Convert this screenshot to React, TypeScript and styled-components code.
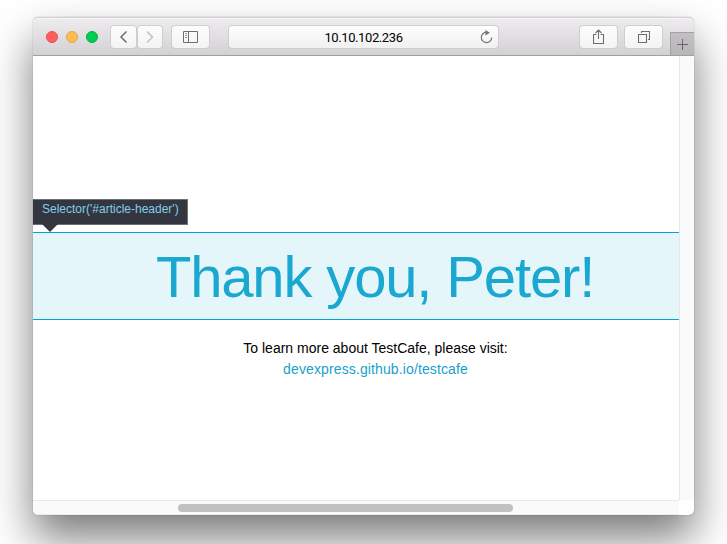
import React from 'react';
import styled, { createGlobalStyle } from 'styled-components';

const GlobalStyle = createGlobalStyle`
  * { box-sizing: border-box; }
  html, body { margin: 0; height: 100%; overflow: hidden; background: #fff; }
  body { font-family: "Liberation Sans", Arial, sans-serif; }
`;

const Desktop = styled.main`
  width: 727px;
  height: 544px;
  padding: 17px 33px 29px;
  overflow: hidden;
  background: #fff;
`;

const BrowserWindow = styled.section`
  display: flex;
  flex-direction: column;
  width: 661px;
  height: 498px;
  border-radius: 5px;
  background: #fff;
  box-shadow: 0 0 1px rgba(0, 0, 0, 0.5), 0 23px 44px rgba(0, 0, 0, 0.52);
`;

const Toolbar = styled.header`
  display: flex;
  align-items: flex-start;
  flex: none;
  height: 39px;
  padding: 8px 0 0 13px;
  border-top: 1px solid #d4d3d4;
  border-bottom: 1px solid #a09fa1;
  border-radius: 5px 5px 0 0;
  background: linear-gradient(#eeecef, #d3d1d4);
  box-shadow: inset 0 1px #f6f5f6;
`;

const Lights = styled.div`
  display: flex;
  gap: 8px;
  padding-top: 5px;
  margin-right: 12px;
`;

const Light = styled.span<{ $fill: string; $edge: string }>`
  width: 12px;
  height: 12px;
  border: 1px solid ${(p) => p.$edge};
  border-radius: 50%;
  background: ${(p) => p.$fill};
`;

const ToolButton = styled.button<{ $width: number; $gap?: number; $muted?: boolean }>`
  display: flex;
  align-items: center;
  justify-content: center;
  width: ${(p) => p.$width}px;
  height: 24px;
  margin: -1px ${(p) => p.$gap ?? 0}px 0 0;
  padding: 0;
  border: 0;
  border-radius: 4px;
  background: linear-gradient(#fdfdfd, #f4f3f4);
  box-shadow: inset 0 0 0 1px #cfcdd0, inset 0 -1px #bebcbf;
  color: ${(p) => (p.$muted ? '#c0c0c0' : '#6e6e6e')};
`;

const Address = styled.div`
  display: grid;
  grid-template-columns: 20px 1fr 20px;
  align-items: center;
  width: 271px;
  height: 24px;
  margin: -1px 80px 0 0;
  border-radius: 4px;
  background: linear-gradient(#fefefe, #f1f0f1);
  box-shadow: inset 0 0 0 1px #cfcdd0, inset 0 -1px #b9b7ba;
  color: #747474;
`;

const AddressText = styled.span`
  grid-column: 2;
  padding-top: 2px;
  text-align: center;
  color: #000;
  font: 13px/22px Roboto, sans-serif;
  letter-spacing: -0.4px;
`;

const NewTab = styled.button`
  display: flex;
  align-items: center;
  justify-content: center;
  width: 24px;
  height: 23px;
  margin: 6px 0 0;
  padding: 0;
  border: solid #a3a1a4;
  border-width: 1px 0 0 1px;
  background: linear-gradient(#c2c0c3, #b7b5b8);
  color: #69676a;
`;

const Body = styled.div`
  display: grid;
  grid-template-columns: 646px 15px;
  grid-template-rows: 444px 15px;
`;

const Page = styled.article`
  display: flex;
  flex-direction: column;
  align-items: flex-start;
  padding-top: 143px;
  background: #fff;
`;

const SelectorTip = styled.div`
  position: relative;
  width: 155px;
  height: 26px;
  padding-left: 8px;
  margin-bottom: 7px;
  border: 1px solid #6c7079;
  border-left-color: #33363e;
  background: #33363f;
  color: #84cdeb;
  font-size: 12px;
  line-height: 18px;
  white-space: nowrap;
  &::after {
    content: '';
    position: absolute;
    left: 8px;
    top: 24px;
    border: solid transparent;
    border-width: 8px 8px 0;
    border-top-color: #33363f;
  }
`;

const Headline = styled.h1`
  width: 100%;
  height: 88px;
  margin: 0;
  padding: 1px 0 0 38px;
  border: solid #00a3d3;
  border-width: 1px 0;
  background: #e5f6fb;
  color: #1aa7d0;
  font-size: 58px;
  font-weight: 400;
  line-height: 86px;
  letter-spacing: -1.15px;
  text-align: center;
  white-space: nowrap;
`;

const Visit = styled.p`
  width: 100%;
  margin: 18px 0 0;
  padding-left: 39px;
  color: #000;
  font-size: 14px;
  line-height: 21px;
  text-align: center;
`;

const VisitLink = styled.a`
  color: #1a9fca;
  letter-spacing: 0.12px;
`;

const VerticalTrack = styled.div`
  border-left: 1px solid #e7e7e7;
  background: #fafafa;
`;

const HorizontalTrack = styled.div`
  padding: 3px 0 0 145px;
  border-top: 1px solid #e7e7e7;
  border-bottom: 1px solid #ededed;
  border-radius: 0 0 0 5px;
  background: #fafafa;
`;

const Thumb = styled.div`
  width: 335px;
  height: 8px;
  border-radius: 4px;
  background: #c1c1c1;
`;

export default function App() {
  return (
    <>
      <GlobalStyle />
      <Desktop>
        <BrowserWindow>
          <Toolbar>
            <Lights>
              <Light $fill="#ff5f5c" $edge="#e7514d" />
              <Light $fill="#ffbd4f" $edge="#e4a547" />
              <Light $fill="#00cb54" $edge="#00b545" />
            </Lights>
            <ToolButton $width={27} aria-label="Back">
              <svg width="9" height="14" viewBox="0 0 9 14" fill="none" stroke="currentColor" strokeWidth="1.5">
                <path d="M7.5 1.5 2 7l5.5 5.5" />
              </svg>
            </ToolButton>
            <ToolButton $width={26} $gap={8} $muted aria-label="Forward">
              <svg width="10" height="14" viewBox="0 0 10 14" fill="none" stroke="currentColor" strokeWidth="1.5">
                <path d="M2 1.5 7.5 7 2 12.5" />
              </svg>
            </ToolButton>
            <ToolButton $width={39} $gap={18} aria-label="Sidebar">
              <svg width="15" height="12" viewBox="0 0 15 12" fill="none" stroke="currentColor">
                <path d="M.5.5h14v11H.5zM5.5.5v11" />
                <path d="M2 2.5h2M2 4.5h2M2 6.5h2" opacity="0.7" />
              </svg>
            </ToolButton>
            <Address>
              <AddressText>10.10.102.236</AddressText>
              <svg width="14" height="14" viewBox="0 0 14 14" fill="none" stroke="currentColor" strokeWidth="1.2">
                <path d="M7.5 2.2A5.2 5.2 0 1 0 12.7 7.4" />
                <path d="m6.3 0 4.7 2.7-4.7 2.8z" fill="currentColor" stroke="none" />
              </svg>
            </Address>
            <ToolButton $width={39} $gap={6} aria-label="Share">
              <svg width="12" height="16" viewBox="0 0 12 16" fill="none" stroke="currentColor" strokeWidth="1.1">
                <path d="M3.5 5.5h-3v9h10v-9h-3M5.5 10V1M2.5 4l3-3 3 3" />
              </svg>
            </ToolButton>
            <ToolButton $width={39} $gap={7} aria-label="Tabs">
              <svg width="12" height="12" viewBox="0 0 12 12" fill="none" stroke="currentColor" strokeWidth="1.1">
                <path d="M.5 3.5h8v8h-8zM3.5 2V.5h8v8H10" />
              </svg>
            </ToolButton>
            <NewTab aria-label="New tab">
              <svg width="11" height="11" viewBox="0 0 11 11" fill="none" stroke="currentColor">
                <path d="M5.5 0v11M0 5.5h11" />
              </svg>
            </NewTab>
          </Toolbar>
          <Body>
            <Page>
              <SelectorTip>Selector('#article-header')</SelectorTip>
              <Headline>Thank you, Peter!</Headline>
              <Visit>
                To learn more about TestCafe, please visit:
                <br />
                <VisitLink>devexpress.github.io/testcafe</VisitLink>
              </Visit>
            </Page>
            <VerticalTrack />
            <HorizontalTrack>
              <Thumb />
            </HorizontalTrack>
          </Body>
        </BrowserWindow>
      </Desktop>
    </>
  );
}
